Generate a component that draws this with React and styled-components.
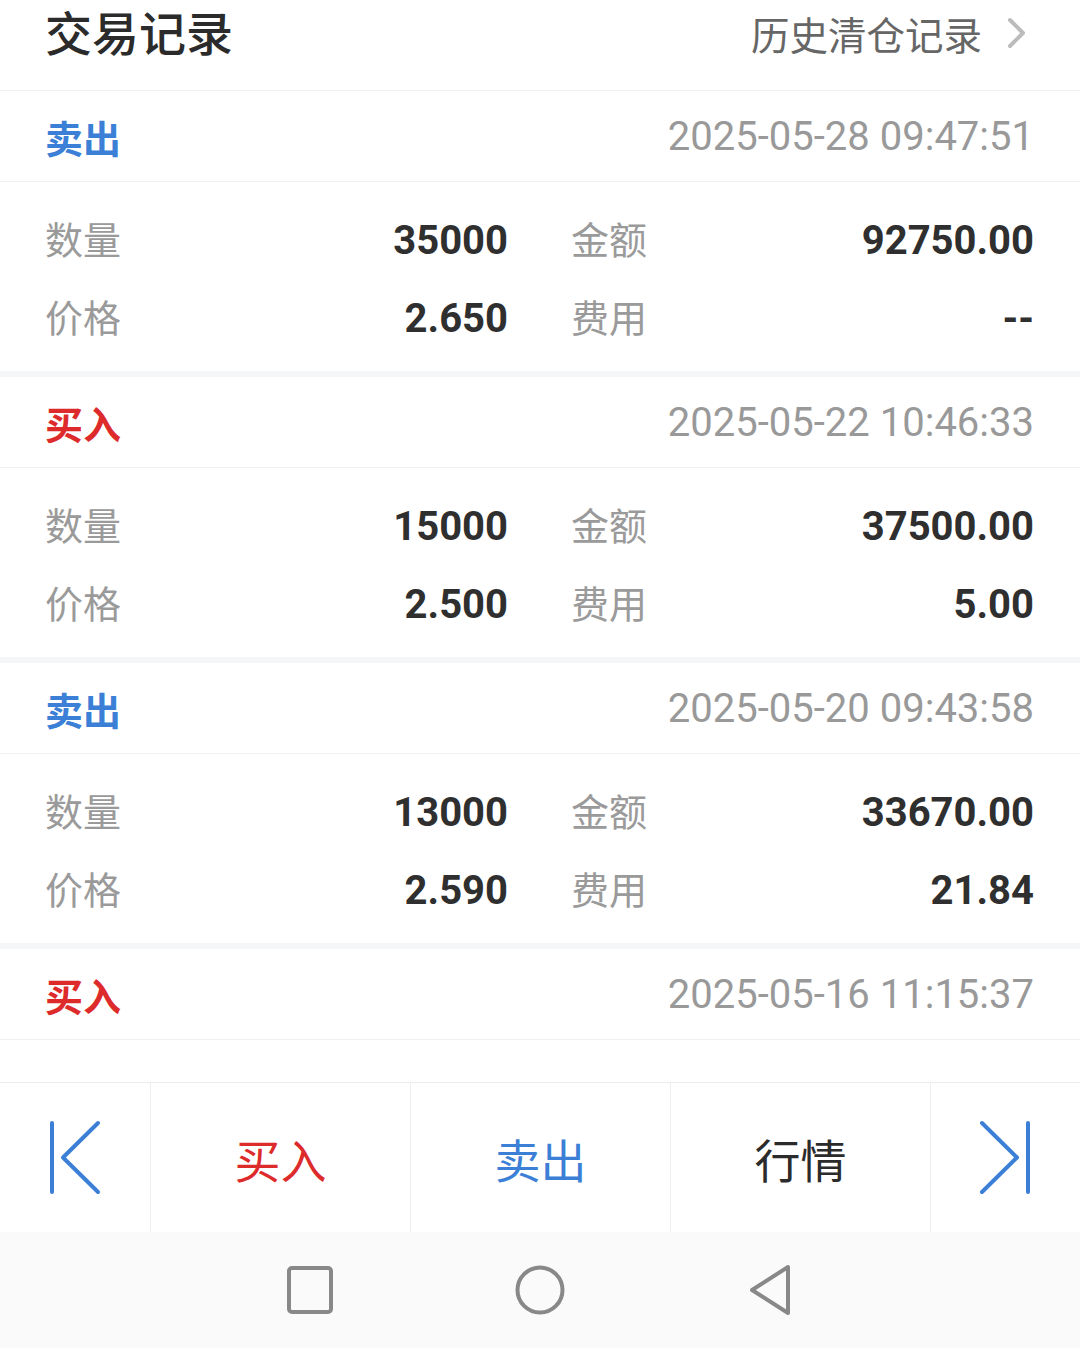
import React from "react";
import styled, { createGlobalStyle } from "styled-components";

const GlobalStyle = createGlobalStyle`
  html, body {
    margin: 0;
    padding: 0;
    background: #ffffff;
  }
  * {
    box-sizing: border-box;
  }
`;

const BLUE = "#3b7fd6";
const RED = "#dd2a2b";
const CJK = `"Noto Sans CJK SC", "Noto Sans", sans-serif`;
const NUM = `Roboto, "Noto Sans CJK SC", sans-serif`;

const Screen = styled.div`
  width: 1080px;
  height: 1348px;
  display: flex;
  flex-direction: column;
  overflow: hidden;
  background: #fff;
  font-family: ${CJK};
`;

const Header = styled.header`
  height: 91px;
  flex-shrink: 0;
  display: flex;
  justify-content: space-between;
  align-items: flex-start;
  padding: 0 52px 0 45px;
  border-bottom: 1px solid #f1f1f1;
`;

const Title = styled.h1`
  margin: 0;
  padding-top: 7px;
  font-size: 47px;
  font-weight: 500;
  line-height: 47px;
  color: #2b2b2b;
`;

const HistoryLink = styled.a`
  display: flex;
  align-items: center;
  gap: 24px;
  height: 66px;
  font-size: 38.5px;
  color: #666;
  text-decoration: none;
`;

const List = styled.div`
  flex: 1;
  overflow: hidden;
  display: flex;
  flex-direction: column;
`;

const Record = styled.section`
  flex-shrink: 0;
  &:not(:last-child) {
    border-bottom: 6px solid #f5f6f8;
  }
`;

const RecordHead = styled.div`
  height: 91px;
  display: flex;
  justify-content: space-between;
  align-items: center;
  padding: 0 46px 0 45px;
  border-bottom: 1px solid #f1f1f1;
`;

const Side = styled.span`
  font-size: 38px;
  font-weight: 700;
  color: ${(p) => (p.$buy ? RED : BLUE)};
`;

const Time = styled.span`
  font-family: ${NUM};
  font-size: 40px;
  color: #999;
`;

const RecordBody = styled.div`
  display: grid;
  grid-template-columns: 1fr 1fr;
  column-gap: 63px;
  padding: 19px 46px 14px 45px;
`;

const Cell = styled.div`
  height: 78px;
  display: flex;
  justify-content: space-between;
  align-items: center;
`;

const Label = styled.span`
  font-size: 38px;
  line-height: 1;
  margin-top: -4px;
  color: #9a9a9a;
`;

const Value = styled.span`
  font-family: ${NUM};
  font-size: 40px;
  font-weight: 700;
  color: #2f2f2f;
`;

const ActionBar = styled.nav`
  height: 150px;
  flex-shrink: 0;
  display: grid;
  grid-template-columns: 150px 260px 260px 260px 150px;
  border-top: 1px solid #ececec;
  background: #fff;
`;

const Action = styled.button`
  border: 0;
  border-left: ${(p) => (p.$first ? "0" : "1px solid #eeeeee")};
  background: transparent;
  display: flex;
  align-items: center;
  justify-content: center;
  font-family: ${CJK};
  font-size: 46px;
  color: ${(p) => p.$color || "#2b2b2b"};
  padding: 0;
`;

const SystemBar = styled.div`
  height: 116px;
  flex-shrink: 0;
  background: #fafafa;
  display: flex;
  align-items: center;
  justify-content: center;
`;

const SysButton = styled.div`
  width: 230px;
  display: flex;
  justify-content: center;
  align-items: center;
`;

const ChevronRight = () => (
  <svg width="22" height="34" viewBox="0 0 22 34">
    <path d="M4 4 L17 17 L4 30" fill="none" stroke="#bcbcbc" strokeWidth="4" strokeLinecap="round" strokeLinejoin="round" />
  </svg>
);

const FirstIcon = () => (
  <svg width="60" height="76" viewBox="0 0 60 76">
    <path d="M7 3 V72" stroke={BLUE} strokeWidth="4" strokeLinecap="round" />
    <path d="M53 3 L18 37.5 L53 72" fill="none" stroke={BLUE} strokeWidth="4" strokeLinecap="round" strokeLinejoin="round" />
  </svg>
);

const LastIcon = () => (
  <svg width="60" height="76" viewBox="0 0 60 76">
    <path d="M52 3 V72" stroke={BLUE} strokeWidth="4" strokeLinecap="round" />
    <path d="M6 3 L41 37.5 L6 72" fill="none" stroke={BLUE} strokeWidth="4" strokeLinecap="round" strokeLinejoin="round" />
  </svg>
);

const records = [
  { buy: false, time: "2025-05-28 09:47:51", qty: "35000", amount: "92750.00", price: "2.650", fee: "--" },
  { buy: true, time: "2025-05-22 10:46:33", qty: "15000", amount: "37500.00", price: "2.500", fee: "5.00" },
  { buy: false, time: "2025-05-20 09:43:58", qty: "13000", amount: "33670.00", price: "2.590", fee: "21.84" },
  { buy: true, time: "2025-05-16 11:15:37" },
];

export default function App() {
  return (
    <>
      <GlobalStyle />
      <Screen>
        <Header>
          <Title>交易记录</Title>
          <HistoryLink href="#">
            历史清仓记录
            <ChevronRight />
          </HistoryLink>
        </Header>

        <List>
          {records.map((r) => (
            <Record key={r.time}>
              <RecordHead>
                <Side $buy={r.buy}>{r.buy ? "买入" : "卖出"}</Side>
                <Time>{r.time}</Time>
              </RecordHead>
              {r.qty && (
                <RecordBody>
                  <Cell>
                    <Label>数量</Label>
                    <Value>{r.qty}</Value>
                  </Cell>
                  <Cell>
                    <Label>金额</Label>
                    <Value>{r.amount}</Value>
                  </Cell>
                  <Cell>
                    <Label>价格</Label>
                    <Value>{r.price}</Value>
                  </Cell>
                  <Cell>
                    <Label>费用</Label>
                    <Value>{r.fee}</Value>
                  </Cell>
                </RecordBody>
              )}
            </Record>
          ))}
        </List>

        <ActionBar>
          <Action $first>
            <FirstIcon />
          </Action>
          <Action $color={RED}>买入</Action>
          <Action $color={BLUE}>卖出</Action>
          <Action>行情</Action>
          <Action>
            <LastIcon />
          </Action>
        </ActionBar>

        <SystemBar>
          <SysButton>
            <svg width="48" height="50" viewBox="0 0 48 50">
              <rect x="3" y="3" width="42" height="44" rx="3" fill="none" stroke="#888" strokeWidth="4" />
            </svg>
          </SysButton>
          <SysButton>
            <svg width="52" height="52" viewBox="0 0 52 52">
              <circle cx="26" cy="26" r="22.5" fill="none" stroke="#888" strokeWidth="4" />
            </svg>
          </SysButton>
          <SysButton>
            <svg width="48" height="54" viewBox="0 0 48 54">
              <path d="M42 4 V50 L6 27 Z" fill="none" stroke="#888" strokeWidth="4" strokeLinejoin="round" />
            </svg>
          </SysButton>
        </SystemBar>
      </Screen>
    </>
  );
}
